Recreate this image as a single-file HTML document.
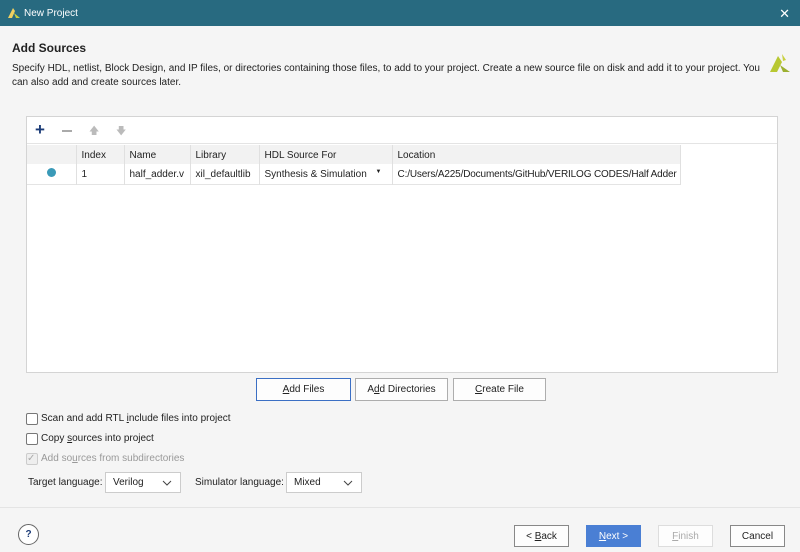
<!DOCTYPE html>
<html><head><style>
*{box-sizing:border-box}
body{margin:0;width:800px;height:552px;background:#f5f5f5;font-family:"Liberation Sans",sans-serif;font-size:10px;color:#222;position:relative;overflow:hidden}
.a{position:absolute;white-space:nowrap}
.btn{position:absolute;border:1px solid #adadad;background:#fdfdfd;text-align:center;font-size:10px;line-height:22px;color:#222}
.cb{position:absolute;width:12px;height:12px;border:1px solid #777;background:#fff;border-radius:2px}
.sel{position:absolute;height:21px;border:1px solid #ccc;background:#fff;font-size:10px;line-height:20px;padding-left:7px}
.sel svg{position:absolute;right:8px;top:7px}
table{table-layout:fixed}
th,td{font-weight:normal;text-align:left;padding:1px 5px 0;border-right:1px solid #e0e0e0;white-space:nowrap;overflow:hidden}
</style></head><body>
<div class="a" style="left:0;top:0;width:800px;height:26px;background:#286a80;color:#fff;font-size:10px;line-height:27px">
<svg class="a" style="left:7px;top:6px" width="14" height="13" viewBox="0 0 14 13"><path d="M1 12 L6 2 L8 5 L5 12Z" fill="#f0d060"/><path d="M7 7 L13 12 L9 12Z" fill="#c8d040"/></svg>
<span class="a" style="left:24px;top:0">New Project</span>
<span class="a" style="right:10px;top:0;font-size:13px">✕</span>
</div>
<div class="a" style="left:12px;top:41px;font-size:12px;font-weight:bold">Add Sources</div>
<div class="a" style="left:12px;top:62px;width:755px;line-height:14px;font-size:10px;white-space:normal">Specify HDL, netlist, Block Design, and IP files, or directories containing those files, to add to your project. Create a new source file on disk and add it to your project. You can also add and create sources later.</div>
<svg class="a" style="left:768px;top:52px" width="24" height="22" viewBox="0 0 24 22"><path d="M2 20 L10 4 L14 10 L9 20Z" fill="#b8c832"/><path d="M12 13 L22 20 L15 20Z" fill="#9cb030"/><path d="M14 2 L18 8 L15 9Z" fill="#c8d040"/></svg>
<div class="a" style="left:26px;top:116px;width:752px;height:257px;background:#fff;border:1px solid #d4d4d4">
<div class="a" style="left:0;top:0;width:750px;height:27px;border-bottom:1px solid #e4e4e4">
<span class="a" style="left:8px;top:3px;font-size:17px;font-weight:bold;color:#1c3c78">+</span>
<span class="a" style="left:35px;top:13px;width:10px;height:2px;background:#aaa"></span>
<span class="a" style="left:62px;top:7px;color:#bbb;font-size:10px">🡅</span>
<span class="a" style="left:89px;top:7px;color:#bbb;font-size:10px">🡇</span>
</div>
<table class="a" style="left:0;top:28px;border-collapse:collapse;font-size:10px;width:653px">
<col style="width:49px"><col style="width:48px"><col style="width:66px"><col style="width:69px"><col style="width:133px"><col style="width:288px">
<tr style="height:19px;background:#f2f2f2"><th></th><th>Index</th><th>Name</th><th>Library</th><th>HDL Source For</th><th>Location</th></tr>
<tr style="height:20px;border-bottom:1px solid #e4e4e4"><td><span style="display:inline-block;width:9px;height:9px;border-radius:50%;background:#3a9ab8;margin-left:15px"></span></td><td>1</td><td>half_adder.v</td><td>xil_defaultlib</td><td>Synthesis &amp; Simulation <span style="float:right;font-size:6px;margin-right:5px">▼</span></td><td style="letter-spacing:-0.15px">C:/Users/A225/Documents/GitHub/VERILOG CODES/Half Adder</td></tr>
</table>
</div>
<div class="btn" style="left:256px;top:378px;width:95px;height:23px;border:1px solid #3b6fc4"><u>A</u>dd Files</div>
<div class="btn" style="left:355px;top:378px;width:93px;height:23px">A<u>d</u>d Directories</div>
<div class="btn" style="left:453px;top:378px;width:93px;height:23px"><u>C</u>reate File</div>
<div class="cb" style="left:26px;top:413px"></div><div class="a" style="left:41px;top:413px">Scan and add RTL <u>i</u>nclude files into project</div>
<div class="cb" style="left:26px;top:433px"></div><div class="a" style="left:41px;top:433px">Copy <u>s</u>ources into project</div>
<div class="cb" style="left:26px;top:453px;border-color:#ccc;background:#eee;color:#aaa;font-size:10px;line-height:10px">✓</div><div class="a" style="left:41px;top:453px;color:#999">Add so<u>u</u>rces from subdirectories</div>
<div class="a" style="left:28px;top:477px">Target language:</div>
<div class="sel" style="left:105px;top:472px;width:76px">Verilog<svg width="10" height="6"><path d="M1 1L5 5L9 1" stroke="#444" fill="none"/></svg></div>
<div class="a" style="left:195px;top:477px">Simulator language:</div>
<div class="sel" style="left:286px;top:472px;width:76px">Mixed<svg width="10" height="6"><path d="M1 1L5 5L9 1" stroke="#444" fill="none"/></svg></div>
<div class="a" style="left:0;top:507px;width:800px;height:1px;background:#e4e4e4"></div>
<div class="a" style="left:18px;top:524px;width:21px;height:21px;border:1px solid #666;border-radius:50%;background:#fff;text-align:center;line-height:19px;font-weight:bold;font-size:10px;color:#1c3c78">?</div>
<div class="btn" style="left:514px;top:525px;width:55px;height:22px;border-color:#888">&lt; <u>B</u>ack</div>
<div class="btn" style="left:586px;top:525px;width:55px;height:22px;background:#4a7fd4;border-color:#4a7fd4;color:#fff"><u>N</u>ext &gt;</div>
<div class="btn" style="left:658px;top:525px;width:55px;height:22px;border-color:#ddd;color:#aaa"><u>F</u>inish</div>
<div class="btn" style="left:730px;top:525px;width:55px;height:22px;border-color:#888">Cancel</div>
</body></html>
